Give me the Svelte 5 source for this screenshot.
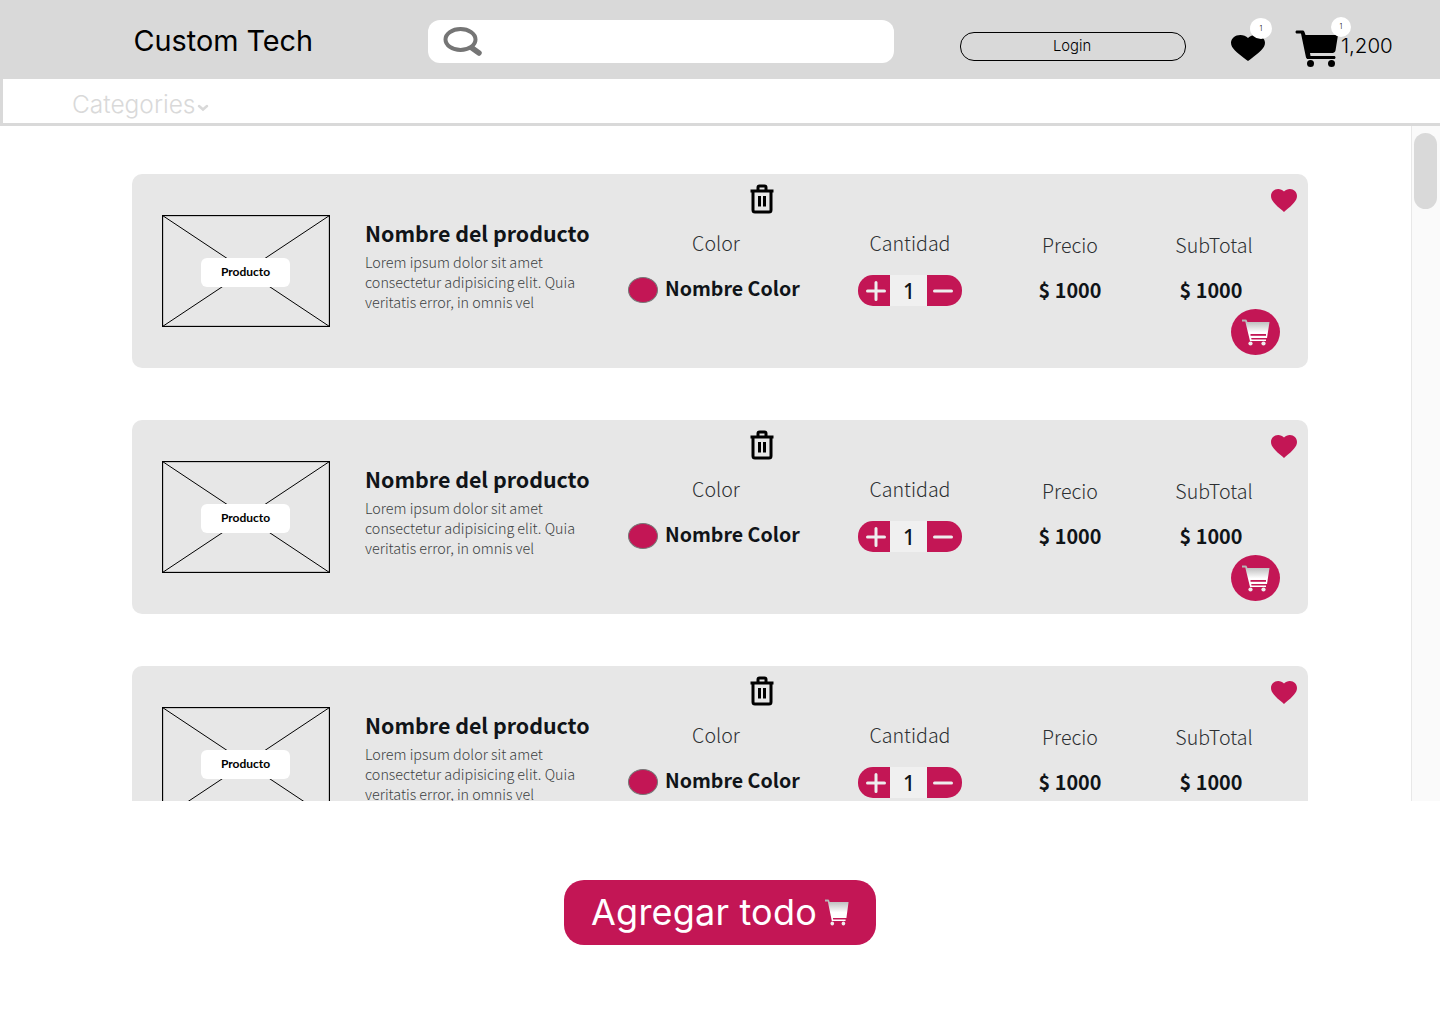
<script>
  const items = [1, 2, 3];
  const heart = "M12 21.35l-1.45-1.32C5.4 15.36 2 12.28 2 8.5 2 5.42 4.42 3 7.5 3c1.74 0 3.41.81 4.5 2.09C13.09 3.81 14.76 3 16.5 3 19.58 3 22 5.42 22 8.5c0 3.78-3.4 6.86-8.55 11.54L12 21.35z";
  const cart = "M0 .5h3.500c.8 0 1.300.4 1.500 1.200L5.400 3H27.500L25 19H9.200l.3 1.500H24V22H8L3.300 2.500H0z";
</script>

<div class="page">
  <header class="top">
    <div class="brand">Custom Tech</div>
    <div class="search">
      <svg width="40" height="30" viewBox="0 0 40 30"><ellipse cx="18.500" cy="12.500" rx="15" ry="10.500" fill="none" stroke="#757575" stroke-width="4"/><path d="M30 21l7 5" stroke="#757575" stroke-width="5.500" stroke-linecap="round"/></svg>
    </div>
    <button class="login">Login</button>
    <div class="heart-wrap">
      <svg width="34" height="26" viewBox="2 3 20 18.350" preserveAspectRatio="none"><path d={heart} fill="#000"/></svg>
      <span class="badge b1">1</span>
    </div>
    <div class="cart-wrap">
      <svg width="44" height="38" viewBox="0 0 44 38"><path d="M2 1.500h5.500c1 0 1.800.6 2 1.600L10.500 6H43l-2.500 15.500c-.3 1.500-1.500 2.500-3 2.500H15l.5 3h23.500c1 0 1.500.7 1.500 1.500s-.5 1.500-1.500 1.500H13c-1 0-1.700-.6-2-1.500L6 4.500H2c-1 0-1.500-.7-1.500-1.500S1 1.500 2 1.500z" fill="#000"/><circle cx="15.500" cy="34.500" r="3.500"/><circle cx="36.500" cy="34.500" r="3.500"/></svg>
      <span class="badge b2">1</span>
    </div>
    <div class="total">1,200</div>
  </header>

  <nav class="cats">
    <span>Categories</span>
    <svg width="12" height="8" viewBox="0 0 12 8"><path d="M2 2l4 3.500L10 2" fill="none" stroke="#d9d9d9" stroke-width="2.500" stroke-linecap="round"/></svg>
  </nav>

  <main class="scroller">
    <div class="list">
      {#each items as item (item)}
        <article class="card">
          <svg class="trash" width="26" height="30" viewBox="0 0 26 30"><path d="M1.500 7h23M9 7V3.500C9 2.500 9.500 2 10.500 2h5c1 0 1.500.5 1.500 1.500V7M4 7v19c0 1.200.8 2 2 2h14c1.200 0 2-.8 2-2V7M10.500 12v10.500M15.500 12v10.500" fill="none" stroke="#000" stroke-width="3"/></svg>
          <svg class="fav" width="26" height="23" viewBox="2 3 20 18.350" preserveAspectRatio="none"><path d={heart} fill="#c31655"/></svg>

          <div class="thumb">
            <svg class="xbox" width="168" height="112" viewBox="0 0 168 112"><rect x=".5" y=".5" width="167" height="111" fill="none" stroke="#000" stroke-width="1.300"/><path d="M.5.5l167 111M167.500.5L.5 111.500" stroke="#000"/></svg>
            <span class="tag">Producto</span>
          </div>

          <div class="info">
            <h2>Nombre del producto</h2>
            <p>Lorem ipsum dolor sit amet consectetur adipisicing elit. Quia veritatis error, in omnis vel</p>
          </div>

          <div class="col color">
            <div class="label">Color</div>
            <div class="value swatch-row"><span class="swatch"></span><b>Nombre Color</b></div>
          </div>

          <div class="col qty">
            <div class="label">Cantidad</div>
            <div class="stepper">
              <span class="step plus"><svg width="20" height="20" viewBox="0 0 20 20"><path d="M10 1.500v17M1.500 10h17" stroke="#eee" stroke-width="3" stroke-linecap="round"/></svg></span>
              <span class="num">1</span>
              <span class="step minus"><svg width="20" height="20" viewBox="0 0 20 20"><path d="M1.500 10h17" stroke="#eee" stroke-width="3" stroke-linecap="round"/></svg></span>
            </div>
          </div>

          <div class="col price">
            <div class="label">Precio</div>
            <div class="value"><b>$ 1000</b></div>
          </div>

          <div class="col sub">
            <div class="label">SubTotal</div>
            <div class="value"><b>$ 1000</b></div>
          </div>

          <div class="add">
            <svg width="28" height="27" viewBox="0 0 28 27"><defs><linearGradient id="g{item}" x1="0" y1="0" x2="0" y2="1"><stop offset="0" stop-color="#b0b0b0"/><stop offset=".6" stop-color="#fff"/></linearGradient></defs><path d={cart} fill="url(#g{item})"/><rect x="8.500" y="15" width="15.500" height="1.800" fill="#c31655"/><circle cx="8.500" cy="24.500" r="2.100" fill="#eee"/><circle cx="21.500" cy="24.500" r="2.100" fill="#eee"/></svg>
          </div>
        </article>
      {/each}
    </div>
    <div class="track"><div class="thumbbar"></div></div>
  </main>

  <div class="foot">
    <button class="all">
      <span>Agregar todo</span>
      <svg width="24" height="27" viewBox="0 0 28 27" preserveAspectRatio="none"><defs><linearGradient id="gall" x1="0" y1="0" x2="0" y2="1"><stop offset="0" stop-color="#b0b0b0"/><stop offset=".6" stop-color="#fff"/></linearGradient></defs><path d={cart} fill="url(#gall)"/><circle cx="8.500" cy="24.500" r="2.100" fill="#eee"/><circle cx="21.500" cy="24.500" r="2.100" fill="#eee"/></svg>
    </button>
  </div>
</div>

<style>
  :global(body) { margin: 0; background: #fff; }
  .page { width: 1440px; height: 1024px; overflow: hidden; font-family: Inter, "Liberation Sans", sans-serif; color: #000; }

  .top { height: 79px; background: #d9d9d9; display: flex; align-items: flex-start; position: relative; }
  .brand { margin: 22px 0 0 133.500px; width: 294.500px; font-size: 28.800px; line-height: 38px; }
  .search { width: 466px; height: 43px; margin-top: 20px; background: #fff; border-radius: 12px; display: flex; align-items: center; padding-left: 14px; box-sizing: border-box; }
  .login { width: 226px; height: 29px; margin: 32px 0 0 66px; box-sizing: border-box; border: 1px solid #000; border-radius: 14px; background: transparent; font: 300 14.800px/22px Inter, sans-serif; color: #000; padding: 0 2px 2px 0; }
  .heart-wrap { position: relative; margin: 35px 0 0 45px; width: 34px; height: 26px; }
  .heart-wrap svg, .cart-wrap svg { display: block; }
  .cart-wrap { position: relative; margin: 29px 0 0 30px; width: 46px; height: 38px; }
  .total { margin: 31px 0 0 0; font: 300 20.500px/30px Inter, sans-serif; }
  .badge { position: absolute; width: 22px; height: 21px; border-radius: 50%; background: #fff; font: 300 7px/21px Inter, sans-serif; text-align: center; }
  .b1 { left: 19px; top: -17px; }
  .b2 { left: 36px; top: -12px; width: 20px; height: 20px; line-height: 20px; }

  .cats { height: 47px; box-sizing: border-box; border-left: 3px solid #d9d9d9; border-bottom: 3px solid #d9d9d9; padding: 10px 0 0 69px; display: flex; align-items: flex-start; color: #d9d9d9; font-size: 24.500px; line-height: 30px; font-weight: 300; }
  .cats svg { margin: 15px 0 0 1px; }

  .scroller { height: 675px; overflow: hidden; display: flex; }
  .list { width: 1411px; padding: 48px 103px 0 132px; box-sizing: border-box; display: flex; flex-direction: column; gap: 52px; }
  .track { width: 29px; box-sizing: border-box; background: #fafafa; border-left: 1px solid #e8e8e8; padding: 7px 2px 0 2px; }
  .thumbbar { width: 23px; height: 76px; border-radius: 12px; background: #d9d9d9; }

  .card { flex: none; width: 1176px; height: 194px; box-sizing: border-box; background: #e7e7e7; border-radius: 10px; position: relative; display: grid; grid-template-columns: 198px 298px 230px 180px 135px 135px; font-family: "Noto Sans CJK SC", "Noto Sans", sans-serif; color: #101418; }
  .trash { position: absolute; left: 617px; top: 10px; }
  .fav { position: absolute; left: 1139px; top: 15px; }
  .add { position: absolute; left: 1099px; top: 135px; width: 49px; height: 46px; border-radius: 50%; background: #c31655; display: flex; align-items: center; justify-content: center; padding-top: 1px; box-sizing: border-box; }

  .thumb { margin: 41px 0 0 30px; width: 168px; height: 112px; position: relative; display: flex; align-items: center; justify-content: center; }
  .xbox { position: absolute; left: 0; top: 0; }
  .tag { position: relative; width: 89px; height: 29px; background: #fff; border-radius: 6px; font: 700 12px/27px Lato, "Noto Sans", sans-serif; color: #000; text-align: center; margin: 2px 0 0 -1px; }

  .info { padding: 43px 0 0 35px; }
  .info h2 { margin: 0; font-size: 21.400px; font-weight: 700; line-height: 32px; white-space: nowrap; }
  .info p { margin: 3px 0 0; width: 225px; font-size: 14.350px; line-height: 20px; font-weight: 300; color: #3c3f42; }

  .col { padding-top: 54px; }
  .label { font-size: 19.600px; line-height: 30px; font-weight: 300; text-align: center; color: #2c2f32; }
  .value { font-size: 19.800px; line-height: 30px; text-align: center; margin-top: 15px; }
  .value b { font-weight: 700; }

  .color .label { width: 172px; margin-left: 2px; }
  .swatch-row { margin-top: 15px; display: flex; align-items: center; gap: 7px; white-space: nowrap; font-size: 19.600px; }
  .swatch { width: 30px; height: 26px; box-sizing: border-box; border-radius: 50%; background: #c31655; border: 1px solid #777; margin-top: 3px; }

  .qty .label { width: 104px; }
  .stepper { margin-top: 17px; width: 104px; height: 31px; display: flex; border-radius: 15px; overflow: hidden; }
  .step { background: #c31655; display: flex; align-items: center; justify-content: center; }
  .plus { width: 32px; padding-left: 3px; box-sizing: border-box; }
  .minus { width: 35px; padding-right: 4px; box-sizing: border-box; }
  .num { width: 37px; background: #f0f0f0; font: 500 21px/32px "Noto Sans", sans-serif; text-align: center; color: #101418; padding-left: 1px; box-sizing: border-box; }

  .price { padding-top: 56px; }
  .price .label, .price .value { width: 64px; }
  .price .label { white-space: nowrap; }
  .sub { padding-top: 56px; }
  .sub .label { width: 82px; }
  .sub .value { width: 64px; margin-left: 6px; }

  .foot { padding-top: 79px; display: flex; justify-content: center; }
  .all { width: 312px; height: 65px; border: 0; border-radius: 20px; background: #c31655; color: #fff; font: 400 36px/65px Inter, sans-serif; display: flex; align-items: center; justify-content: center; gap: 8px; padding: 0; letter-spacing: .2px; }
</style>
